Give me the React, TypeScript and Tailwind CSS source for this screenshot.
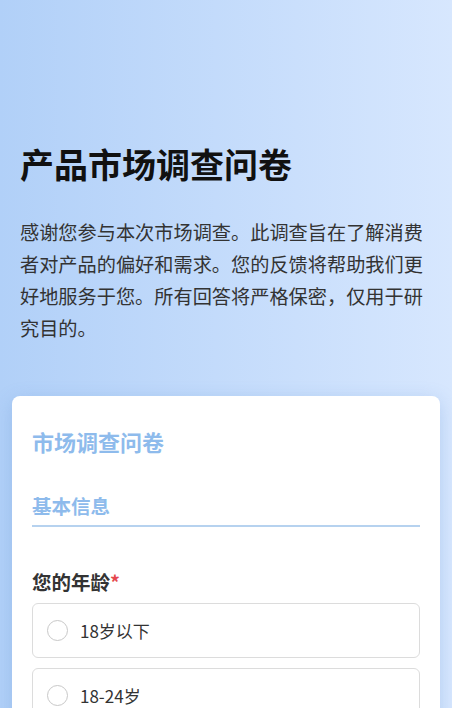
import { useState } from "react";

const ageOptions = ["18岁以下", "18-24岁", "25-34岁", "35-44岁", "45岁以上"];

export default function App() {
  const [age, setAge] = useState<string | null>(null);

  return (
    <div
      className="min-h-screen bg-gradient-to-r from-[#b1d0f8] to-[#d7e7fe] px-3 pt-[140px] pb-10"
      style={{ fontFamily: '"Noto Sans CJK SC", "Noto Sans", sans-serif' }}
    >
      {/* header */}
      <div className="px-2">
        <h1 className="text-[34px] leading-[48px] font-bold text-[#111]">产品市场调查问卷</h1>
        <p className="mt-[28px] text-[19.2px] leading-[32px] text-[#333]">
          感谢您参与本次市场调查。此调查旨在了解消费者对产品的偏好和需求。您的反馈将帮助我们更好地服务于您。所有回答将严格保密，仅用于研究目的。
        </p>
      </div>

      {/* form card */}
      <div className="mt-[52px] rounded-lg bg-white px-5 pt-5 pb-6 shadow-[0_4px_18px_rgba(90,140,210,0.28)]">
        <h2 className="text-[22px] leading-[50px] font-bold text-[#8ebbec]">市场调查问卷</h2>

        <div className="mt-[25px] border-b-2 border-[#b6d2ef] pb-[4px]">
          <h3 className="text-[19.5px] leading-[30px] font-bold text-[#8ebbec]">基本信息</h3>
        </div>

        <div className="mt-[40px]">
          <div className="text-[19.5px] leading-[30px] font-bold text-[#333]">
            您的年龄<span className="text-[#e5484d]">*</span>
          </div>
          <div className="mt-[6px] flex flex-col gap-[10px]">
            {ageOptions.map((opt) => (
              <label
                key={opt}
                className="flex h-[55px] cursor-pointer items-center gap-[12px] rounded-md border border-[#dcdcdc] pl-[14px]"
                onClick={() => setAge(opt)}
              >
                <span
                  className={
                    age === opt
                      ? "h-[21px] w-[21px] rounded-full border-[6px] border-[#4a90e2]"
                      : "h-[21px] w-[21px] rounded-full border border-[#c8c8c8]"
                  }
                />
                <span className="text-[17px] text-[#333]">{opt}</span>
              </label>
            ))}
          </div>
        </div>
      </div>
    </div>
  );
}
